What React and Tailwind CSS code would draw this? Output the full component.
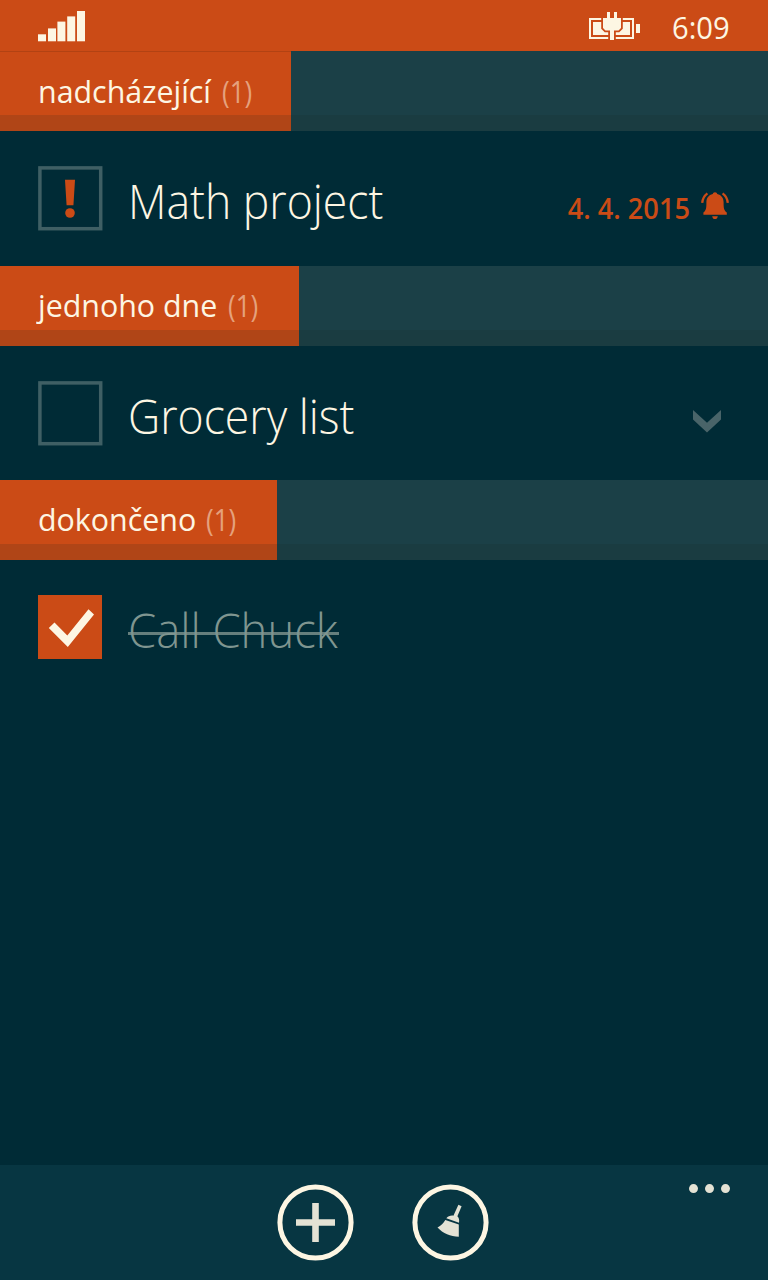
const fontStack = "font-['Open_Sans','Noto_Sans',sans-serif]";

function SignalIcon() {
  return (
    <svg width="47" height="31" viewBox="0 0 47 31" fill="#fdf6e3" className="shrink-0">
      <rect x="0" y="23.3" width="8" height="7" />
      <rect x="10" y="17.4" width="8" height="12.9" />
      <rect x="19.4" y="10.6" width="8" height="19.7" />
      <rect x="29.2" y="5.4" width="8" height="24.9" />
      <rect x="39" y="0" width="8" height="30.3" />
    </svg>
  );
}

function BatteryIcon() {
  return (
    <svg width="51" height="28" viewBox="0 0 51 28" className="shrink-0">
      <rect x="1" y="7" width="43" height="19" fill="none" stroke="#fdf6e3" strokeWidth="2" />
      <rect x="4" y="10" width="37" height="13" fill="#fdf6e3" />
      <rect x="47" y="12" width="4" height="9" fill="#fdf6e3" />
      <path
        d="M14 6H32V16L29.5 18.5H25V28H21V18.5H16.5L14 16Z"
        fill="#fdf6e3"
        stroke="#cb4b16"
        strokeWidth="3.6"
        className="[paint-order:stroke]"
      />
      <rect x="14" y="0" width="18" height="6" fill="#cb4b16" />
      <path d="M18 0H21V7H18ZM25 0H28V7H25Z" fill="#fdf6e3" />
    </svg>
  );
}

function BellIcon() {
  return (
    <svg width="28" height="28" viewBox="0 0 28 28" className="shrink-0">
      <path
        d="M14 0.3C15.3 0.3 16 1 16.2 2C20.4 3 22.6 6 22.6 10.2C22.6 16 22.8 18 25.8 20.5V22.8H2.4V20.5C5.2 18 5.4 16 5.4 10.2C5.4 6 7.6 3 11.8 2C12 1 12.7 0.3 14 0.3ZM11.2 24.2H16.8C16.5 26.2 15.5 27 14 27S11.5 26.2 11.2 24.2Z"
        fill="#cb4b16"
      />
      <path
        d="M6.4 1.3C3.5 3.5 1.6 6.5 1.2 10.8M21.6 1.3C24.5 3.5 26.4 6.5 26.8 10.8"
        fill="none"
        stroke="#cb4b16"
        strokeWidth="2.3"
      />
    </svg>
  );
}

function Section({ title, width }) {
  return (
    <div className="h-20 shrink-0 bg-[#1b4047] flex relative">
      <div className={`h-20 bg-[#cb4b16] pl-[38px] pt-[23px] ${width}`}>
        <div className="flex text-[31px] leading-8 whitespace-pre text-[#fdf6e3]">
          <span className="origin-left scale-x-[0.98]">{title}</span>
          <span className="ml-[7px] origin-left scale-x-[0.84] text-[#e5a17d]">(1)</span>
        </div>
      </div>
      <div className="absolute left-0 bottom-0 w-full h-4 bg-[#1c2820]/[0.15]" />
    </div>
  );
}

function EmptyCheckbox({ important }) {
  return (
    <svg width="65" height="65" viewBox="0 0 65 65" className="shrink-0 -mr-px">
      <rect x="1.9" y="1.9" width="60.8" height="60.8" fill="none" stroke="#3f5f64" strokeWidth="3.5" />
      {important && (
        <g fill="#cb4b16">
          <path d="M27 13.8H37L35.4 39.3H28.6Z" />
          <circle cx="32" cy="47" r="4.8" />
        </g>
      )}
    </svg>
  );
}

function Task({ box, children, trailing }) {
  return (
    <div className="h-[134.5px] shrink-0 flex pl-[38px] pr-[38px] pt-[35px]">
      {box}
      <div className="pl-[26px] pt-[3px] grow leading-[64px] text-[48px] font-light text-[#fdf6e3] whitespace-nowrap">
        {children}
      </div>
      {trailing}
    </div>
  );
}

export default function App() {
  return (
    <div className={`w-[768px] h-[1280px] bg-[#002b36] flex flex-col overflow-hidden ${fontStack}`}>
      <header className="h-[51px] shrink-0 bg-[#cb4b16] flex items-start pl-[38px] pr-[38px]">
        <div className="pt-[11px]">
          <SignalIcon />
        </div>
        <div className="ml-auto pt-3">
          <BatteryIcon />
        </div>
        <div className="ml-[32px] w-[58px] pt-[11px] text-[31px] leading-8 text-[#fdf6e3]">
          <span className="inline-block origin-left scale-x-[0.94] whitespace-nowrap">6:09</span>
        </div>
      </header>

      <Section title="nadcházející" width="w-[291px] border-t border-[#b24213]" />
      <Task
        box={<EmptyCheckbox important />}
        trailing={
          <div className="flex shrink-0 pt-[26px] text-[#cb4b16]">
            <span className="origin-right scale-x-[0.97] text-[28px] leading-8 font-semibold whitespace-nowrap">
              4. 4. 2015
            </span>
            <div className="ml-[11px] mr-px">
              <BellIcon />
            </div>
          </div>
        }
      >
        <span className="inline-block origin-left scale-x-[0.928]">Math project</span>
      </Task>

      <Section title="jednoho dne" width="w-[299px]" />
      <Task
        box={<EmptyCheckbox />}
        trailing={
          <svg width="28" height="23" viewBox="0 0 28 23" className="mt-[29px] mr-[9px] shrink-0" fill="#496469">
            <path d="M0 0L14 12.7L28 0V9.5L14 22.5L0 9.5Z" />
          </svg>
        }
      >
        <span className="inline-block origin-left scale-x-[0.928]">Grocery list</span>
      </Task>

      <Section title="dokončeno" width="w-[277px]" />
      <Task
        box={
          <div className="size-16 shrink-0 bg-[#cb4b16]">
            <svg width="64" height="64" viewBox="0 0 64 64" fill="#fdf6e3">
              <path d="M10.8 33L16.5 27.6L29.3 40.5L50.5 14.2L56 19.4L29.8 52Z" />
            </svg>
          </div>
        }
      >
        <div className="relative text-[#7f9590]">
          <span className="inline-block origin-left scale-x-[0.945]">Call Chuck</span>
          <span className="absolute left-0 top-[34px] w-[211px] h-[3px] bg-[#7f9590]/80" />
        </div>
      </Task>

      <footer className="mt-auto h-[115px] shrink-0 bg-[#073642] flex pl-[277px] pr-[37px] pt-[19px]">
        <svg width="77" height="77" viewBox="0 0 77 77">
          <circle cx="38.5" cy="38.5" r="35.6" fill="none" stroke="#fdf6e3" strokeWidth="5" />
          <path d="M35.2 19H41.8V35.2H58V41.8H41.8V58H35.2V41.8H19V35.2H35.2Z" fill="#e4e2d4" />
        </svg>
        <svg width="77" height="77" viewBox="0 0 77 77" className="ml-[58px]">
          <circle cx="38.5" cy="38.5" r="35.6" fill="none" stroke="#fdf6e3" strokeWidth="5" />
          <g fill="#e4e2d4">
            <path d="M46.4 20.8L49.6 22.3L45.4 32.2C47 33.5 47.5 35.8 47 38.8L34.3 34.3C36 32.3 38.5 31.3 41.4 31.7Z" />
            <path d="M33.3 35.9L46.8 40.6V52.8C38.5 52.6 31 49.5 25.5 43.5C29 41.5 31.5 39 33.3 35.9Z" />
          </g>
        </svg>
        <svg width="42" height="10" viewBox="0 0 42 10" className="ml-auto" fill="#e4e2d4">
          <circle cx="4.5" cy="4.6" r="4.5" />
          <circle cx="20.5" cy="4.6" r="4.5" />
          <circle cx="36.5" cy="4.6" r="4.5" />
        </svg>
      </footer>
    </div>
  );
}
